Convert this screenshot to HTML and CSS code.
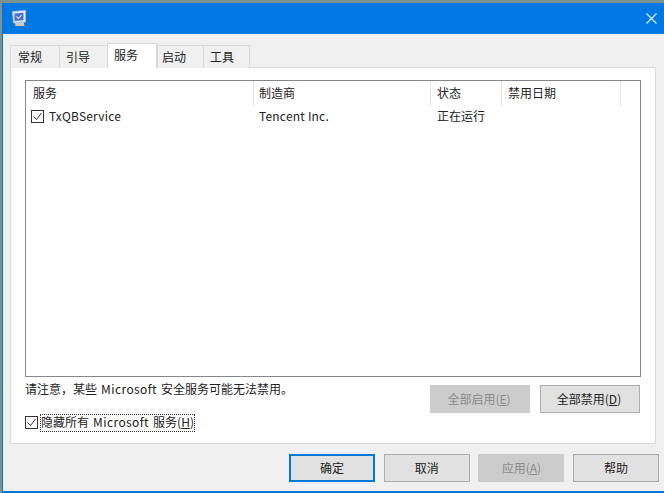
FILE: index.html
```html
<!DOCTYPE html>
<html lang="zh">
<head>
<meta charset="utf-8">
<title>系统配置</title>
<link rel="stylesheet" href="styles.css">
</head>
<body>
<div class="window">
  <div class="titlebar">
    <svg class="appicon" width="15" height="17" viewBox="0 0 15 17">
      <path d="M4 13h7l2 3H3z" fill="#e3c7ad"/>
      <rect x="3" y="12" width="9" height="2" fill="#c6cfe2"/>
      <path d="M.5 1.500l13-1v11.500l-12 1z" fill="#e6ebf5" stroke="#aab6d4" stroke-width="1"/>
      <path d="M2.500 3.500l9-.8v7.500l-9 .8z" fill="#4a6fc8"/>
      <path d="M4.500 6.500l2 2 3-3.500" fill="none" stroke="#d8f0ff" stroke-width="1.100"/>
    </svg>
    <svg class="close" width="11" height="11" viewBox="0 0 11 11">
      <path d="M.5.5l10 10M10.500.5l-10 10" stroke="#d8eafc" stroke-width="1.300" fill="none"/>
    </svg>
  </div>
  <div class="content">
    <div class="tabs">
      <div class="tab t1">常规</div>
      <div class="tab t2">引导</div>
      <div class="tab active">服务</div>
      <div class="tab t4">启动</div>
      <div class="tab t5">工具</div>
    </div>
    <div class="panel">
      <div class="list">
        <div class="head">
          <div class="col c1">服务</div>
          <div class="col c2">制造商</div>
          <div class="col c3">状态</div>
          <div class="col c4">禁用日期</div>
        </div>
        <div class="row">
          <div class="cell c1 svc"><span class="check"><svg viewBox="0 0 13 13" width="13" height="13"><path d="M2.500 6.500l3 3 5-6.500" fill="none" stroke="#333" stroke-width="1"/></svg></span>TxQBService</div>
          <div class="cell c2">Tencent Inc.</div>
          <div class="cell c3">正在运行</div>
        </div>
      </div>
      <div class="actions">
        <div class="note">请注意，某些<span class="latin"> Microsoft </span>安全服务可能无法禁用。</div>
        <div class="btn wide disabled">全部启用(<u>E</u>)</div>
        <div class="btn wide">全部禁用(<u>D</u>)</div>
      </div>
      <div class="hide">
        <span class="check"><svg viewBox="0 0 13 13" width="13" height="13"><path d="M2.500 6.500l3 3 5-6.500" fill="none" stroke="#333" stroke-width="1"/></svg></span>
        <span class="focus">隐藏所有<span class="latin"> Microsoft </span>服务(<u>H</u>)</span>
      </div>
    </div>
    <div class="footer">
      <div class="btn big default">确定</div>
      <div class="btn big">取消</div>
      <div class="btn big disabled">应用(<u>A</u>)</div>
      <div class="btn big">帮助</div>
    </div>
  </div>
</div>
</body>
</html>
```
FILE: styles.css
```css
* { box-sizing: border-box; }
html, body { margin: 0; padding: 0; }
body {
  width: 664px;
  height: 493px;
  overflow: hidden;
  padding: 3px 0 0 2px;
  font-family: "Noto Sans CJK SC", "Liberation Sans", sans-serif;
  font-size: 12px;
  color: #222;
  background: #7d9391;
}
.window {
  height: 490px;
  background: #0078d7;
  padding: 0 0 2px 1px;
  display: flex;
  flex-direction: column;
}
.titlebar {
  height: 31px;
  flex: none;
  margin-left: -1px;
  background: #0078e4;
  display: flex;
  align-items: center;
  justify-content: space-between;
  padding: 0 7px 0 10px;
}
.appicon { margin-top: -1px; }
.close { margin-top: 0; }
.content {
  flex: 1;
  background: #f0f0f0;
  padding: 9px 5px 0 7px;
}
.tabs {
  display: flex;
  height: 25px;
  align-items: flex-end;
}
.tab {
  flex: none;
  height: 23px;
  background: #f0f0f0;
  border: 1px solid #d9d9d9;
  border-bottom: none;
  line-height: 22px;
  font-size: 12px;
  color: #222;
}
.t1 { width: 50px; margin-right: -1px; padding-left: 7px; }
.t2 { width: 49px; margin-right: -1px; padding-left: 6px; }
.t4 { width: 47px; margin-right: -1px; padding-left: 4px; }
.t5 { width: 47px; padding-left: 6px; }
.tab.active {
  height: 25px;
  width: 50px;
  background: #fff;
  position: relative;
  z-index: 1;
  padding-left: 6px;
  line-height: 21px;
}
.panel {
  background: #fff;
  border: 1px solid #d9d9d9;
  height: 377px;
  width: 646px;
  margin-top: -1px;
  padding: 12px 15px 0 14px;
}
.list {
  width: 616px;
  height: 297px;
  border: 1px solid #828790;
  background: #fff;
}
.head { display: flex; height: 25px; }
.col {
  border-right: 1px solid #e5e5e5;
  padding-left: 6px;
  line-height: 24px;
}
.head .c1 { padding-left: 7px; }
.head .c2 { padding-left: 5px; }
.c1 { width: 228px; }
.c2 { width: 177px; }
.c3 { width: 71px; }
.c4 { width: 119px; }
.row { display: flex; height: 20px; line-height: 20px; }
.cell { padding-left: 5px; letter-spacing: .2px; }
.c3.cell { padding-left: 6px; letter-spacing: 0; }
.svc { display: flex; align-items: center; gap: 5px; }
.check {
  display: inline-flex;
  width: 13px;
  height: 13px;
  border: 1px solid #333;
  background: #fff;
  flex: none;
}
.check svg { margin: -1px; }
.latin { letter-spacing: .4px; word-spacing: 1px; }
.actions {
  display: flex;
  align-items: flex-start;
  margin-top: 8px;
  height: 28px;
}
.note { width: 405px; line-height: 16px; margin-top: -4px; }
.btn {
  display: flex;
  align-items: center;
  justify-content: center;
  background: #e1e1e1;
  border: 1px solid #adadad;
  color: #222;
  font-size: 12px;
  white-space: pre;
  padding: 0 2px 2px 0;
}
.btn.wide { width: 100px; height: 28px; }
.btn.wide.disabled { margin-right: 10px; }
.btn.disabled {
  background: #ccc;
  border-color: #ccc;
  color: #8a8a8a;
}
.hide {
  display: flex;
  align-items: center;
  margin-top: 1px;
  height: 17px;
}
.focus {
  margin-left: 2px;
  outline: 1px dotted #333;
  outline-offset: -1px;
  padding: 0 1px;
  height: 18px;
  line-height: 16px;
  white-space: pre;
}
.footer {
  display: flex;
  justify-content: flex-end;
  gap: 8.67px;
  padding-top: 10px;
}
.btn.big { width: 86px; height: 28px; padding-right: 0; }
.btn.default { border: 2px solid #0078d7; }
```
